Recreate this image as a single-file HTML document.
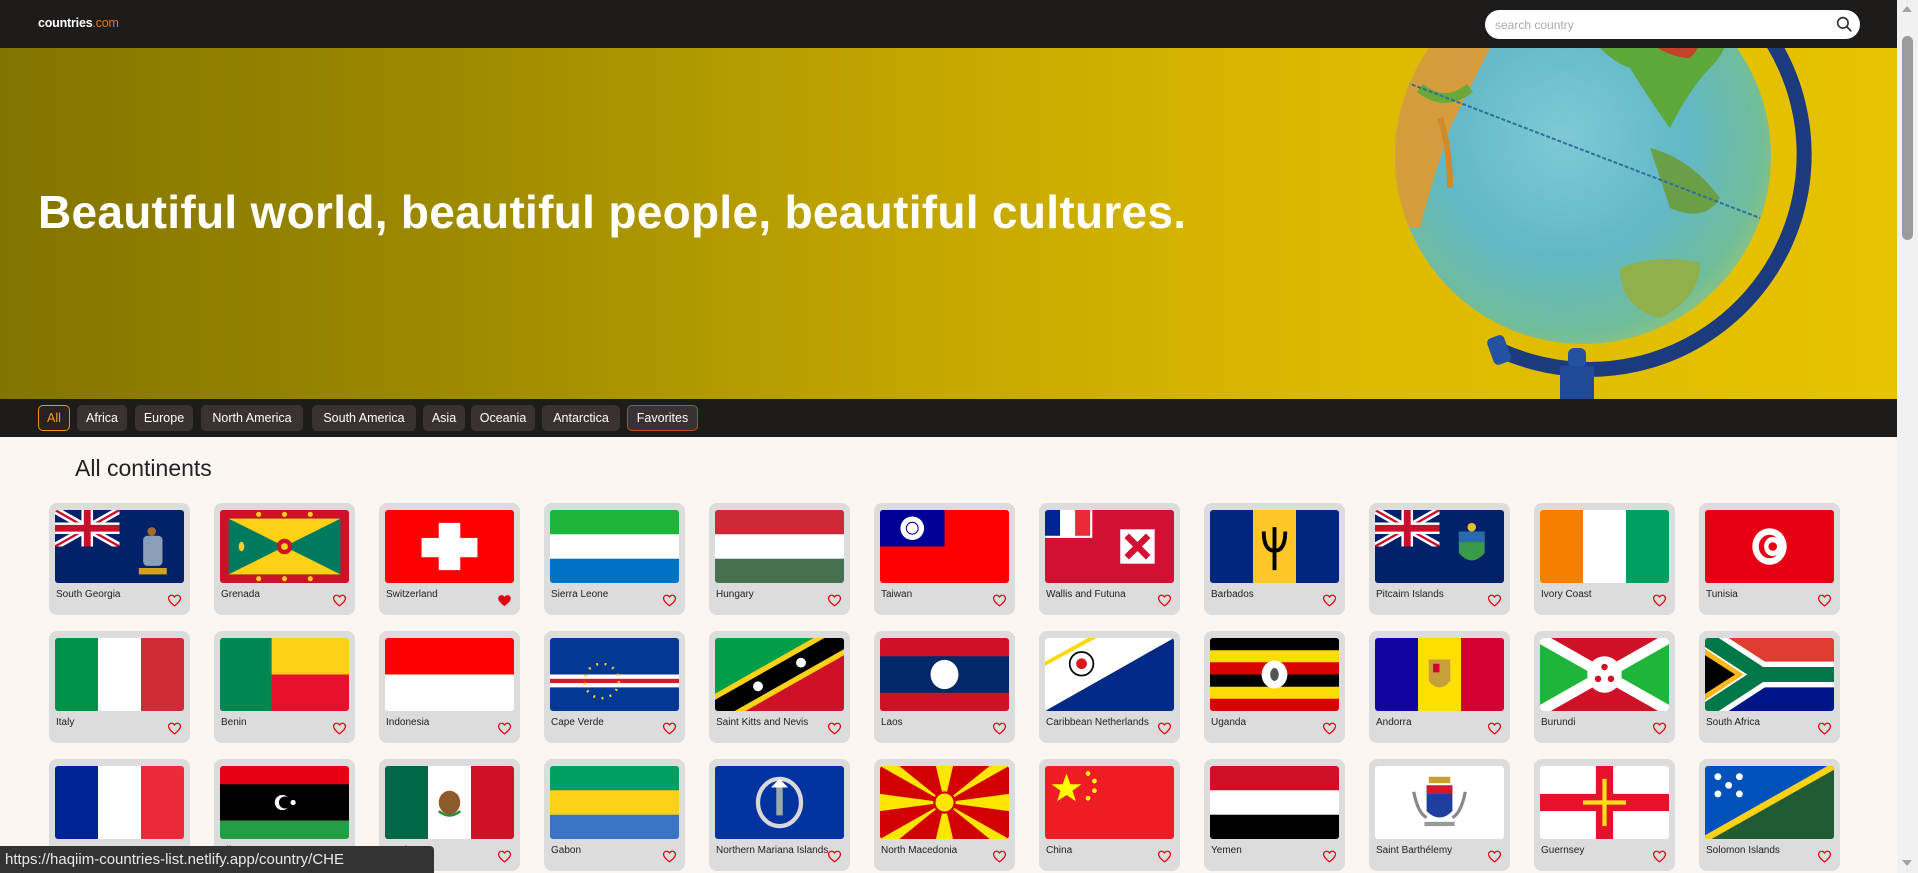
<!DOCTYPE html>
<html><head><meta charset="utf-8">
<style>
*{box-sizing:border-box;margin:0;padding:0}
body{width:1918px;height:873px;overflow:hidden;background:#fcf6f2;font-family:"Liberation Sans",sans-serif;position:relative}
.hdr{position:absolute;left:0;top:0;width:1897px;height:48px;background:#1e1b1b}
.logo{position:absolute;left:38px;top:16px;font-size:12.5px;font-weight:bold;color:#fff;letter-spacing:-0.2px}
.logo span{color:#e07a10;font-weight:normal}
.search{position:absolute;left:1485px;top:10px;width:375px;height:29px;background:#fff;border-radius:15px}
.search .ph{position:absolute;left:10px;top:8px;font-size:12px;color:#a9a9b3}
.search svg{position:absolute;right:7px;top:5px}
.sb{position:absolute;left:1897px;top:0;width:21px;height:873px;background:#f1f1f1}
.sb .th{position:absolute;left:5px;top:36px;width:11px;height:204px;background:#9b9b9b;border-radius:6px}
.banner{position:absolute;left:0;top:48px;width:1897px;height:351px;overflow:hidden;background:linear-gradient(90deg,#837400 0%,#9e8b00 25%,#c5a800 50%,#dcb900 70%,#e6c200 100%)}
.banner h1{position:absolute;left:38px;top:137px;font-size:46px;color:#fff;font-weight:bold;letter-spacing:0.3px;white-space:nowrap}
.fbar{position:absolute;left:0;top:399px;width:1897px;height:38px;background:#1e1b1b}
.fb{position:absolute;top:6px;height:26px;background:#3a3232;border-radius:5px;color:#fff;font-size:12.5px;line-height:26px;text-align:center}
.title{position:absolute;left:75px;top:455px;font-size:23px;color:#222;font-weight:300}
.card{position:absolute;width:141px;height:112px;background:#dcdcdc;border-radius:8px}
.card svg.f{position:absolute;left:6px;top:7px;width:129px;height:73px;border-radius:3px}
.card .n{position:absolute;left:7px;top:86px;font-size:10px;color:#222;white-space:nowrap}
.card svg.h{position:absolute;right:8px;top:90px}
.status{position:absolute;left:0;top:846px;width:434px;height:27px;background:#333;color:#e8e8e8;font-size:15px;line-height:27px;padding-left:5px;border-top-right-radius:4px}
</style></head><body>
<svg width="0" height="0" style="position:absolute"><defs>
<symbol id="uj" viewBox="0 0 30 17"><rect width="30" height="17" fill="#012169"/><path d="M0 0L30 17M30 0L0 17" stroke="#fff" stroke-width="3.4"/><path d="M0 0L30 17M30 0L0 17" stroke="#c8102e" stroke-width="1.1"/><path d="M15 0v17M0 8.5h30" stroke="#fff" stroke-width="5.4"/><path d="M15 0v17M0 8.5h30" stroke="#c8102e" stroke-width="3.2"/></symbol>
<symbol id="ht" viewBox="0 0 24 24"><path d="M12 20.5C5 15 2.5 12 2.5 8.5 2.5 5.5 4.8 3.5 7.3 3.5c2 0 3.5 1.1 4.7 2.8 1.2-1.7 2.7-2.8 4.7-2.8 2.5 0 4.8 2 4.8 5 0 3.5-2.5 6.5-9.5 12z" fill="none" stroke="#e3000f" stroke-width="2"/></symbol>
</defs></svg>

<div class="hdr"><div class="logo">countries<span>.com</span></div>
<div class="search"><div class="ph">search country</div><svg width="18" height="18" viewBox="0 0 24 24"><circle cx="10.5" cy="10.5" r="7" fill="none" stroke="#333" stroke-width="2.2"/><path d="M15.5 15.5L21 21" stroke="#333" stroke-width="2.4" stroke-linecap="round"/></svg></div></div>

<div class="banner">
<svg width="1897" height="351" style="position:absolute;left:0;top:0">
<defs><radialGradient id="gl" cx="0.45" cy="0.45" r="0.65"><stop offset="0" stop-color="#7ec9d6"/><stop offset="0.5" stop-color="#62b8c6"/><stop offset="0.8" stop-color="#70bd9a"/><stop offset="1" stop-color="#a9c867"/></radialGradient>
<clipPath id="gc"><circle cx="1583" cy="108" r="188"/></clipPath></defs>
<path d="M1773 -5 A215 215 0 0 1 1502 303" fill="none" stroke="#1c3a7e" stroke-width="15"/>
<circle cx="1583" cy="108" r="188" fill="url(#gl)"/>
<g clip-path="url(#gc)">
<path d="M1380 20 Q1420 -10 1470 -40 L1500 -20 Q1470 40 1450 80 Q1430 140 1420 180 L1380 180 Z" fill="#e29a30" opacity="0.9"/>
<path d="M1420 40 Q1445 60 1470 40" stroke="#6aa83a" stroke-width="10" fill="none"/>
<path d="M1570 -40 Q1600 10 1630 20 Q1655 60 1670 80 Q1690 40 1710 20 Q1740 -10 1720 -40 Z" fill="#5ca83a"/>
<path d="M1620 -30 Q1660 10 1690 10 Q1710 -10 1700 -40 Z" fill="#c2432a"/>
<path d="M1650 100 Q1690 110 1720 150 Q1705 175 1670 160 Z" fill="#6a9c3a" opacity="0.9"/>
<path d="M1620 220 Q1660 205 1700 215 Q1700 250 1660 270 Q1620 260 1620 220Z" fill="#8fb04a"/>
<path d="M1440 70 Q1450 100 1450 140" stroke="#d08a2a" stroke-width="6" fill="none"/>
<path d="M1395 30 L1760 170" stroke="#2f6f9c" stroke-width="2" stroke-dasharray="4 2"/>
</g>
<rect x="1490" y="288" width="18" height="28" rx="5" fill="#2452a0" transform="rotate(-20 1499 302)"/>
<rect x="1568" y="300" width="18" height="20" rx="6" fill="#2452a0"/>
<rect x="1560" y="318" width="34" height="40" fill="#1f4a98"/>
</svg>
<h1>Beautiful world, beautiful people, beautiful cultures.</h1>
</div>

<div class="fbar">
<div class="fb" style="left:38px;width:32px;background:#2a2222;border:1px solid #e8951b;color:#f0a020;line-height:24px">All</div>
<div class="fb" style="left:77px;width:50px">Africa</div>
<div class="fb" style="left:135px;width:58px">Europe</div>
<div class="fb" style="left:201px;width:102px">North America</div>
<div class="fb" style="left:312px;width:104px">South America</div>
<div class="fb" style="left:423px;width:42px">Asia</div>
<div class="fb" style="left:471px;width:64px">Oceania</div>
<div class="fb" style="left:542px;width:78px">Antarctica</div>
<div class="fb" style="left:627px;width:71px;border:1px solid #a5542a;line-height:24px">Favorites</div>
</div>

<div class="title">All continents</div>

<!-- ROW 1 y=503 -->
<div class="card" style="left:49px;top:503px"><svg class="f" viewBox="0 0 60 34" preserveAspectRatio="none"><rect width="60" height="34" fill="#012169"/><use href="#uj" width="30" height="17"/><rect x="41" y="12" width="9" height="14" rx="2" fill="#8aa0b8"/><circle cx="45" cy="10" r="2" fill="#a56a2a"/><rect x="39" y="27" width="13" height="3" fill="#d4a020"/></svg><div class="n">South Georgia</div><svg class="h" width="15" height="15"><use href="#ht" width="15" height="15"/></svg></div>

<div class="card" style="left:214px;top:503px"><svg class="f" viewBox="0 0 60 34" preserveAspectRatio="none"><rect width="60" height="34" fill="#ce1126"/><rect x="4" y="4" width="52" height="26" fill="#007a5e"/><path d="M4 4H56L30 17ZM4 30H56L30 17Z" fill="#fcd116"/><circle cx="30" cy="17" r="3.6" fill="#ce1126"/><circle cx="30" cy="17" r="1.6" fill="#fcd116"/><g fill="#fcd116"><circle cx="18" cy="2" r="1.2"/><circle cx="30" cy="2" r="1.2"/><circle cx="42" cy="2" r="1.2"/><circle cx="18" cy="32" r="1.2"/><circle cx="30" cy="32" r="1.2"/><circle cx="42" cy="32" r="1.2"/><ellipse cx="10" cy="17" rx="1.3" ry="2.2"/></g></svg><div class="n">Grenada</div><svg class="h" width="15" height="15"><use href="#ht" width="15" height="15"/></svg></div>

<div class="card" style="left:379px;top:503px"><svg class="f" viewBox="0 0 60 34" preserveAspectRatio="none"><rect width="60" height="34" fill="#ff0000"/><rect x="25" y="6" width="10" height="22" fill="#fff"/><rect x="17" y="13" width="26" height="9" fill="#fff"/></svg><div class="n">Switzerland</div><svg class="h" width="15" height="15" viewBox="0 0 24 24"><path d="M12 21C5 15.5 2 12 2 8.5 2 5.5 4.5 3.3 7.2 3.3c2 0 3.6 1.1 4.8 2.8 1.2-1.7 2.8-2.8 4.8-2.8 2.7 0 5.2 2.2 5.2 5.2 0 3.5-3 7-10 12.5z" fill="#e3000f"/></svg></div>

<div class="card" style="left:544px;top:503px"><svg class="f" viewBox="0 0 60 34" preserveAspectRatio="none"><rect width="60" height="12" fill="#1eb53a"/><rect y="11.3" width="60" height="11.4" fill="#fff"/><rect y="22.7" width="60" height="11.3" fill="#0072c6"/></svg><div class="n">Sierra Leone</div><svg class="h" width="15" height="15"><use href="#ht" width="15" height="15"/></svg></div>

<div class="card" style="left:709px;top:503px"><svg class="f" viewBox="0 0 60 34" preserveAspectRatio="none"><rect width="60" height="12" fill="#ce2939"/><rect y="11.3" width="60" height="11.4" fill="#fff"/><rect y="22.7" width="60" height="11.3" fill="#477050"/></svg><div class="n">Hungary</div><svg class="h" width="15" height="15"><use href="#ht" width="15" height="15"/></svg></div>

<div class="card" style="left:874px;top:503px"><svg class="f" viewBox="0 0 60 34" preserveAspectRatio="none"><rect width="60" height="34" fill="#fe0000"/><rect width="30" height="17" fill="#000095"/><circle cx="15" cy="8.5" r="5.5" fill="#fff"/><circle cx="15" cy="8.5" r="3" fill="#000095"/><circle cx="15" cy="8.5" r="2.5" fill="#fff"/></svg><div class="n">Taiwan</div><svg class="h" width="15" height="15"><use href="#ht" width="15" height="15"/></svg></div>

<div class="card" style="left:1039px;top:503px"><svg class="f" viewBox="0 0 60 34" preserveAspectRatio="none"><rect width="60" height="34" fill="#d21034"/><rect width="22" height="13" fill="#fff"/><rect width="7" height="12" fill="#002395"/><rect x="14" width="7" height="12" fill="#ed2939"/><rect x="35" y="9" width="16" height="16" fill="#fff"/><path d="M38 12L48 22M48 12L38 22" stroke="#d21034" stroke-width="3"/></svg><div class="n">Wallis and Futuna</div><svg class="h" width="15" height="15"><use href="#ht" width="15" height="15"/></svg></div>

<div class="card" style="left:1204px;top:503px"><svg class="f" viewBox="0 0 60 34" preserveAspectRatio="none"><rect width="60" height="34" fill="#00267f"/><rect x="20" width="20" height="34" fill="#ffc726"/><path d="M30 8V28M25 10Q25 19 30 19Q35 19 35 10" fill="none" stroke="#000" stroke-width="1.8"/></svg><div class="n">Barbados</div><svg class="h" width="15" height="15"><use href="#ht" width="15" height="15"/></svg></div>

<div class="card" style="left:1369px;top:503px"><svg class="f" viewBox="0 0 60 34" preserveAspectRatio="none"><rect width="60" height="34" fill="#012169"/><use href="#uj" width="30" height="17"/><path d="M39 10H51V20Q45 27 39 20Z" fill="#3a9a4a"/><rect x="39" y="10" width="12" height="5" fill="#2a6aa8"/><circle cx="45" cy="8" r="2" fill="#e0c030"/></svg><div class="n">Pitcairn Islands</div><svg class="h" width="15" height="15"><use href="#ht" width="15" height="15"/></svg></div>

<div class="card" style="left:1534px;top:503px"><svg class="f" viewBox="0 0 60 34" preserveAspectRatio="none"><rect width="20" height="34" fill="#f77f00"/><rect x="20" width="20" height="34" fill="#fff"/><rect x="40" width="20" height="34" fill="#009e60"/></svg><div class="n">Ivory Coast</div><svg class="h" width="15" height="15"><use href="#ht" width="15" height="15"/></svg></div>

<div class="card" style="left:1699px;top:503px"><svg class="f" viewBox="0 0 60 34" preserveAspectRatio="none"><rect width="60" height="34" fill="#e70013"/><ellipse cx="30" cy="17" rx="8" ry="8.5" fill="#fff"/><ellipse cx="30" cy="17" rx="5" ry="5.5" fill="#e70013"/><ellipse cx="31.5" cy="17" rx="4" ry="4.5" fill="#fff"/><circle cx="31.5" cy="17" r="2" fill="#e70013"/></svg><div class="n">Tunisia</div><svg class="h" width="15" height="15"><use href="#ht" width="15" height="15"/></svg></div>

<!-- ROW 2 y=631 -->
<div class="card" style="left:49px;top:631px"><svg class="f" viewBox="0 0 60 34" preserveAspectRatio="none"><rect width="20" height="34" fill="#009246"/><rect x="20" width="20" height="34" fill="#fff"/><rect x="40" width="20" height="34" fill="#ce2b37"/></svg><div class="n">Italy</div><svg class="h" width="15" height="15"><use href="#ht" width="15" height="15"/></svg></div>

<div class="card" style="left:214px;top:631px"><svg class="f" viewBox="0 0 60 34" preserveAspectRatio="none"><rect width="60" height="17" fill="#fcd116"/><rect y="17" width="60" height="17" fill="#e8112d"/><rect width="24" height="34" fill="#008751"/></svg><div class="n">Benin</div><svg class="h" width="15" height="15"><use href="#ht" width="15" height="15"/></svg></div>

<div class="card" style="left:379px;top:631px"><svg class="f" viewBox="0 0 60 34" preserveAspectRatio="none"><rect width="60" height="17" fill="#ff0000"/><rect y="17" width="60" height="17" fill="#fff"/></svg><div class="n">Indonesia</div><svg class="h" width="15" height="15"><use href="#ht" width="15" height="15"/></svg></div>

<div class="card" style="left:544px;top:631px"><svg class="f" viewBox="0 0 60 34" preserveAspectRatio="none"><rect width="60" height="34" fill="#003893"/><rect y="17" width="60" height="6" fill="#fff"/><rect y="19" width="60" height="2" fill="#cf2027"/><circle cx="24" cy="20" r="8" fill="none" stroke="#f7d116" stroke-width="1.2" stroke-dasharray="0.9 3"/></svg><div class="n">Cape Verde</div><svg class="h" width="15" height="15"><use href="#ht" width="15" height="15"/></svg></div>

<div class="card" style="left:709px;top:631px"><svg class="f" viewBox="0 0 60 34" preserveAspectRatio="none"><path d="M0 0H60L0 34Z" fill="#009e49"/><path d="M60 0V34H0Z" fill="#ce1126"/><path d="M0 34L60 0" stroke="#fcd116" stroke-width="14"/><path d="M0 34L60 0" stroke="#000" stroke-width="9"/><circle cx="20" cy="22.5" r="2.3" fill="#fff"/><circle cx="40" cy="11.5" r="2.3" fill="#fff"/></svg><div class="n">Saint Kitts and Nevis</div><svg class="h" width="15" height="15"><use href="#ht" width="15" height="15"/></svg></div>

<div class="card" style="left:874px;top:631px"><svg class="f" viewBox="0 0 60 34" preserveAspectRatio="none"><rect width="60" height="34" fill="#ce1126"/><rect y="8.5" width="60" height="17" fill="#002868"/><ellipse cx="30" cy="17" rx="6.5" ry="6.8" fill="#fff"/></svg><div class="n">Laos</div><svg class="h" width="15" height="15"><use href="#ht" width="15" height="15"/></svg></div>

<div class="card" style="left:1039px;top:631px"><svg class="f" viewBox="0 0 60 34" preserveAspectRatio="none"><rect width="60" height="34" fill="#012a87"/><path d="M0 0H60L0 34Z" fill="#fff"/><path d="M0 0H24L0 13Z" fill="#f9d90f"/><path d="M0 0H20L0 11Z" fill="#fff"/><circle cx="17" cy="12" r="5.5" fill="none" stroke="#000" stroke-width="0.8"/><circle cx="17" cy="12" r="2.5" fill="#dc171d"/></svg><div class="n">Caribbean Netherlands</div><svg class="h" width="15" height="15"><use href="#ht" width="15" height="15"/></svg></div>

<div class="card" style="left:1204px;top:631px"><svg class="f" viewBox="0 0 60 34" preserveAspectRatio="none"><rect width="60" height="6" fill="#000"/><rect y="5.7" width="60" height="6" fill="#fcdc04"/><rect y="11.3" width="60" height="6" fill="#d90000"/><rect y="17" width="60" height="6" fill="#000"/><rect y="22.7" width="60" height="6" fill="#fcdc04"/><rect y="28.3" width="60" height="6" fill="#d90000"/><ellipse cx="30" cy="17" rx="6" ry="6.5" fill="#fff"/><ellipse cx="30" cy="17" rx="2" ry="3" fill="#555"/></svg><div class="n">Uganda</div><svg class="h" width="15" height="15"><use href="#ht" width="15" height="15"/></svg></div>

<div class="card" style="left:1369px;top:631px"><svg class="f" viewBox="0 0 60 34" preserveAspectRatio="none"><rect width="20" height="34" fill="#10069f"/><rect x="20" width="20" height="34" fill="#fedf00"/><rect x="40" width="20" height="34" fill="#d50032"/><path d="M25 10H35V20Q30 26 25 20Z" fill="#c7a03a"/><rect x="27" y="12" width="3" height="4" fill="#d50032"/></svg><div class="n">Andorra</div><svg class="h" width="15" height="15"><use href="#ht" width="15" height="15"/></svg></div>

<div class="card" style="left:1534px;top:631px"><svg class="f" viewBox="0 0 60 34" preserveAspectRatio="none"><rect width="60" height="34" fill="#ce1126"/><path d="M0 0L30 17L0 34ZM60 0L30 17L60 34Z" fill="#1eb53a"/><path d="M0 0L60 34M60 0L0 34" stroke="#fff" stroke-width="5"/><ellipse cx="30" cy="17" rx="8" ry="8.5" fill="#fff"/><g fill="#ce1126"><circle cx="30" cy="13.5" r="1.5"/><circle cx="27" cy="19" r="1.5"/><circle cx="33" cy="19" r="1.5"/></g></svg><div class="n">Burundi</div><svg class="h" width="15" height="15"><use href="#ht" width="15" height="15"/></svg></div>

<div class="card" style="left:1699px;top:631px"><svg class="f" viewBox="0 0 60 34" preserveAspectRatio="none"><rect width="60" height="17" fill="#e03c31"/><rect y="17" width="60" height="17" fill="#001489"/><path d="M0 0L26 17L0 34" fill="none" stroke="#fff" stroke-width="12"/><path d="M26 17H60" stroke="#fff" stroke-width="12"/><path d="M0 0L26 17L0 34" fill="none" stroke="#007749" stroke-width="7"/><path d="M26 17H60" stroke="#007749" stroke-width="7"/><path d="M0 5L18 17L0 29Z" fill="#ffb81c"/><path d="M0 8L14 17L0 26Z" fill="#000"/></svg><div class="n">South Africa</div><svg class="h" width="15" height="15"><use href="#ht" width="15" height="15"/></svg></div>

<!-- ROW 3 y=759 -->
<div class="card" style="left:49px;top:759px"><svg class="f" viewBox="0 0 60 34" preserveAspectRatio="none"><rect width="20" height="34" fill="#002395"/><rect x="20" width="20" height="34" fill="#fff"/><rect x="40" width="20" height="34" fill="#ed2939"/></svg><div class="n">France</div><svg class="h" width="15" height="15"><use href="#ht" width="15" height="15"/></svg></div>

<div class="card" style="left:214px;top:759px"><svg class="f" viewBox="0 0 60 34" preserveAspectRatio="none"><rect width="60" height="9" fill="#e70013"/><rect y="8.5" width="60" height="17" fill="#000"/><rect y="25.5" width="60" height="8.5" fill="#239e46"/><circle cx="29" cy="17" r="3.5" fill="#fff"/><circle cx="30.2" cy="17" r="2.8" fill="#000"/><circle cx="34" cy="17" r="1.2" fill="#fff"/></svg><div class="n">Libya</div><svg class="h" width="15" height="15"><use href="#ht" width="15" height="15"/></svg></div>

<div class="card" style="left:379px;top:759px"><svg class="f" viewBox="0 0 60 34" preserveAspectRatio="none"><rect width="20" height="34" fill="#006847"/><rect x="20" width="20" height="34" fill="#fff"/><rect x="40" width="20" height="34" fill="#ce1126"/><ellipse cx="30" cy="17" rx="5" ry="5.5" fill="#8c5a2b"/><path d="M25 21Q30 25 35 21" stroke="#2e8b3a" stroke-width="1.2" fill="none"/></svg><div class="n">Mexico</div><svg class="h" width="15" height="15"><use href="#ht" width="15" height="15"/></svg></div>

<div class="card" style="left:544px;top:759px"><svg class="f" viewBox="0 0 60 34" preserveAspectRatio="none"><rect width="60" height="12" fill="#009e60"/><rect y="11.3" width="60" height="11.4" fill="#fcd116"/><rect y="22.7" width="60" height="11.3" fill="#3a75c4"/></svg><div class="n">Gabon</div><svg class="h" width="15" height="15"><use href="#ht" width="15" height="15"/></svg></div>

<div class="card" style="left:709px;top:759px"><svg class="f" viewBox="0 0 60 34" preserveAspectRatio="none"><rect width="60" height="34" fill="#0032a0"/><ellipse cx="30" cy="17" rx="10" ry="11" fill="none" stroke="#d8d8d8" stroke-width="2"/><rect x="28.5" y="9" width="3" height="14" fill="#9aa"/><path d="M26 10L34 10L30 6Z" fill="#fff"/></svg><div class="n">Northern Mariana Islands</div><svg class="h" width="15" height="15"><use href="#ht" width="15" height="15"/></svg></div>

<div class="card" style="left:874px;top:759px"><svg class="f" viewBox="0 0 60 34" preserveAspectRatio="none"><rect width="60" height="34" fill="#d20000"/><g fill="#ffe600"><path d="M0 0H9L30 17ZM60 0H51L30 17ZM0 34H9L30 17ZM60 34H51L30 17Z"/><path d="M26 0H34L30 17Z"/><path d="M26 34H34L30 17Z"/><path d="M0 13V21L30 17Z"/><path d="M60 13V21L30 17Z"/></g><circle cx="30" cy="17" r="5.2" fill="#d20000"/><circle cx="30" cy="17" r="4.2" fill="#ffe600"/></svg><div class="n">North Macedonia</div><svg class="h" width="15" height="15"><use href="#ht" width="15" height="15"/></svg></div>

<div class="card" style="left:1039px;top:759px"><svg class="f" viewBox="0 0 60 34" preserveAspectRatio="none"><rect width="60" height="34" fill="#ee1c25"/><g fill="#ffff00"><path d="M10 3.5L11.8 8.5H17L12.8 11.5L14.4 16.5L10 13.5L5.6 16.5L7.2 11.5L3 8.5H8.2Z"/><circle cx="20" cy="3.5" r="1.1"/><circle cx="23" cy="7" r="1.1"/><circle cx="23" cy="11.5" r="1.1"/><circle cx="20" cy="15" r="1.1"/></g></svg><div class="n">China</div><svg class="h" width="15" height="15"><use href="#ht" width="15" height="15"/></svg></div>

<div class="card" style="left:1204px;top:759px"><svg class="f" viewBox="0 0 60 34" preserveAspectRatio="none"><rect width="60" height="12" fill="#ce1126"/><rect y="11.3" width="60" height="11.4" fill="#fff"/><rect y="22.7" width="60" height="11.3" fill="#000"/></svg><div class="n">Yemen</div><svg class="h" width="15" height="15"><use href="#ht" width="15" height="15"/></svg></div>

<div class="card" style="left:1369px;top:759px"><svg class="f" viewBox="0 0 60 34" preserveAspectRatio="none"><rect width="60" height="34" fill="#fff"/><path d="M24 9H36V21Q30 27 24 21Z" fill="#1f3fa0"/><rect x="24" y="9" width="12" height="4" fill="#d21a2a"/><rect x="25" y="5" width="10" height="3" fill="#c8a030"/><path d="M18 12Q20 22 24 24M42 12Q40 22 36 24" stroke="#888" stroke-width="1.5" fill="none"/><rect x="23" y="26" width="14" height="2" fill="#999"/></svg><div class="n">Saint Barthélemy</div><svg class="h" width="15" height="15"><use href="#ht" width="15" height="15"/></svg></div>

<div class="card" style="left:1534px;top:759px"><svg class="f" viewBox="0 0 60 34" preserveAspectRatio="none"><rect width="60" height="34" fill="#fff"/><rect x="26" width="8" height="34" fill="#e8112d"/><rect y="13" width="60" height="8" fill="#e8112d"/><rect x="29" y="6" width="2" height="22" fill="#f9dd16"/><rect x="20" y="16" width="20" height="2" fill="#f9dd16"/></svg><div class="n">Guernsey</div><svg class="h" width="15" height="15"><use href="#ht" width="15" height="15"/></svg></div>

<div class="card" style="left:1699px;top:759px"><svg class="f" viewBox="0 0 60 34" preserveAspectRatio="none"><path d="M0 0H60L0 34Z" fill="#0051ba"/><path d="M60 0V34H0Z" fill="#215b33"/><path d="M0 34L60 0" stroke="#fcd116" stroke-width="3"/><g fill="#fff"><circle cx="6" cy="5" r="1.6"/><circle cx="16" cy="5" r="1.6"/><circle cx="11" cy="9" r="1.6"/><circle cx="6" cy="13" r="1.6"/><circle cx="16" cy="13" r="1.6"/></g></svg><div class="n">Solomon Islands</div><svg class="h" width="15" height="15"><use href="#ht" width="15" height="15"/></svg></div>

<div class="sb"><div style="position:absolute;left:5px;top:6px;width:0;height:0;border-left:5px solid transparent;border-right:5px solid transparent;border-bottom:6px solid #a3a3a3"></div><div class="th"></div><div style="position:absolute;left:5px;top:860px;width:0;height:0;border-left:5px solid transparent;border-right:5px solid transparent;border-top:6px solid #a3a3a3"></div></div>

<div class="status">https://haqiim-countries-list.netlify.app/country/CHE</div>
</body></html>
